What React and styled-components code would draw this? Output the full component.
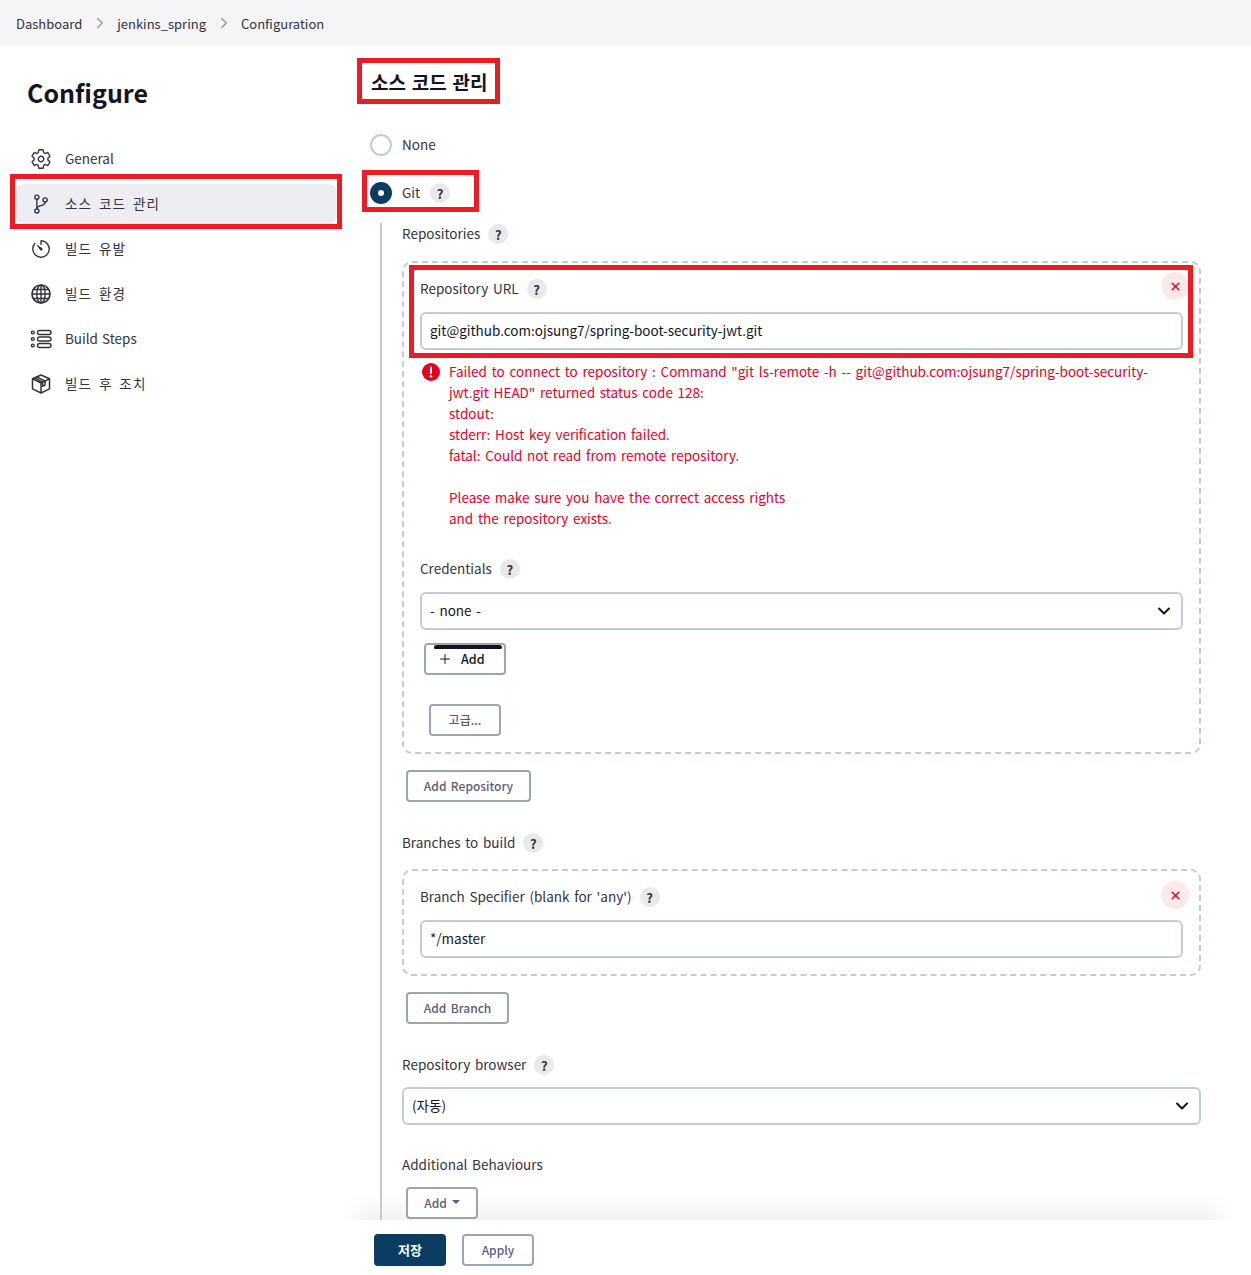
import React from 'react';
import styled, { createGlobalStyle } from 'styled-components';
import {
  IoSettingsOutline,
  IoGitBranchOutline,
  IoTimerOutline,
  IoChevronForward,
  IoAdd,
  IoClose,
} from 'react-icons/io5';

const GlobalStyle = createGlobalStyle`
  html, body { margin: 0; padding: 0; background: #fff; }
  body {
    font-family: "Noto Sans CJK KR", "Noto Sans", sans-serif;
    font-size: 13.5px;
    word-spacing: 1.7px;
    color: #14141f;
  }
  * { box-sizing: border-box; }
`;

const Page = styled.div`
  position: relative;
  width: 1251px;
  height: 1275px;
  overflow: hidden;
`;

const Breadcrumbs = styled.nav`
  display: flex;
  align-items: center;
  height: 46px;
  padding-left: 16px;
  background: #f5f5f7;
  color: #33333d;
`;

const Crumb = styled.span`
  font-size: 13px;
`;

const CrumbSep = styled.span`
  display: flex;
  width: 35px;
  justify-content: center;
  color: #9a9ba3;
  font-size: 16px;
  svg { display: block; margin-left: 1px; }
`;

const Layout = styled.div`
  position: relative;
  z-index: 1;
  display: grid;
  grid-template-columns: 345px 1fr;
`;

const Sidebar = styled.aside`
  padding-left: 16px;
`;

const Title = styled.h1`
  margin: 26px 0 0 11px;
  height: 42px;
  font-size: 25px;
  line-height: 40px;
  font-weight: 700;
  color: #14141f;
`;

const NavList = styled.div`
  display: flex;
  flex-direction: column;
  gap: 5px;
  width: 321px;
  margin-top: 25px;
`;

const NavItem = styled.div`
  position: relative;
  display: flex;
  align-items: center;
  gap: 13px;
  height: 40px;
  padding-left: 14px;
  border-radius: 8px;
  color: #33333d;
  background: ${p => (p.$active ? '#edeef3' : 'transparent')};
  svg { flex: none; width: 22px; height: 22px; }
`;

const NavLabel = styled.span`
  margin-bottom: 2px;
  letter-spacing: ${p => (p.$korean ? '1.2px' : '0')};
  word-spacing: ${p => (p.$korean ? '2.5px' : '1px')};
`;

const Main = styled.main`
  padding: 12px 50px 0 0;
`;

const Heading = styled.h2`
  position: relative;
  display: flex;
  align-items: center;
  width: 143px;
  height: 46px;
  margin: 0 0 0 12px;
  padding-left: 14px;
  font-size: 19px;
  font-weight: 700;
  word-spacing: 1.5px;
  color: #14141f;
`;

const LabelRow = styled.div`
  display: flex;
  align-items: center;
  gap: 8px;
  height: 22px;
  padding-bottom: 2px;
  margin-top: ${p => p.$top || 0}px;
  color: #33333d;
`;

const RadioRow = styled(LabelRow)`
  position: relative;
  gap: 10px;
  margin: ${p => p.$top}px 0 0 25px;
`;

const Radio = styled.span`
  flex: none;
  width: 22px;
  height: 22px;
  margin-top: 2px;
  border-radius: 50%;
  background: #fff;
  border: ${p => (p.$checked ? '8px solid #0b3d62' : '2px solid #c3ccd1')};
`;

const Nested = styled.section`
  margin: 19px 0 0 35px;
  padding-left: 20px;
  border-left: 2px solid #c3ccd1;
  height: 997px;
`;

const Help = styled.span`
  display: inline-flex;
  align-items: center;
  justify-content: center;
  width: 20px;
  height: 20px;
  margin-top: 2px;
  border-radius: 50%;
  background: #e9e9ea;
  color: #33333d;
  font-size: 13px;
  font-weight: 700;
`;

const RepeatBox = styled.div`
  position: relative;
  margin-top: ${p => p.$top}px;
  padding: 15px 16px 16px;
  border: 2px dashed #c3ccd1;
  border-radius: 10px;
`;

const RemoveButton = styled.span`
  position: absolute;
  top: ${p => p.$top}px;
  right: 10px;
  display: flex;
  align-items: center;
  justify-content: center;
  width: 28px;
  height: 28px;
  border-radius: 50%;
  background: #fce9ea;
  color: #e6001f;
  font-size: 15px;
`;

const UrlBlock = styled.div`
  position: relative;
`;

const TextInput = styled.div`
  display: flex;
  align-items: center;
  height: 38px;
  margin-top: ${p => p.$top}px;
  padding: 0 8px 2px;
  border: 2px solid #c3ccd1;
  border-radius: 6px;
  background: #fff;
  color: #14141f;
`;

const SelectBox = styled(TextInput)`
  justify-content: space-between;
  padding-right: 9px;
  svg { width: 16px; height: 16px; margin-top: 2px; color: #14141f; }
`;

const ErrorBlock = styled.div`
  display: flex;
  margin-top: 11px;
  gap: 9px;
  padding-left: 2px;
  color: #e6001f;
  line-height: 21px;
`;

const ErrorIcon = styled.svg`
  flex: none;
  width: 18px;
  height: 18px;
  margin-top: 2px;
`;

const ErrorText = styled.div`
  width: 720px;
  white-space: pre-wrap;
`;

const Button = styled.div`
  position: relative;
  display: flex;
  align-items: center;
  justify-content: center;
  width: ${p => p.$width}px;
  height: 32px;
  margin: ${p => p.$top}px 0 0 ${p => p.$left}px;
  padding-bottom: 2px;
  border: 2px solid #9aa7b0;
  border-radius: 4px;
  background: #fff;
  color: #5c5c78;
  font-size: 12px;
  font-weight: 500;
`;

const CredAdd = styled(Button)`
  color: #14141f;
  justify-content: flex-start;
  padding-left: 11px;
  gap: 8px;
  font-size: 12.5px;
  &::before {
    content: "";
    position: absolute;
    left: 8px;
    right: 2px;
    top: 0;
    height: 4px;
    border-radius: 4px 4px 2px 2px;
    background: #14141f;
  }
  svg { width: 16px; height: 16px; margin-top: 2px; }
`;

const Caret = styled.span`
  width: 0;
  height: 0;
  margin-left: 5px;
  border-left: 4px solid transparent;
  border-right: 4px solid transparent;
  border-top: 4px solid #5c5c78;
`;

const Mark = styled.span`
  position: absolute;
  top: ${p => p.$t}px;
  left: ${p => p.$l}px;
  right: ${p => p.$r}px;
  bottom: ${p => p.$b}px;
  border: ${p => p.$w || 5}px solid #ed1c24;
  pointer-events: none;
`;

const Footer = styled.footer`
  position: absolute;
  left: 345px;
  right: 20px;
  bottom: 0;
  display: flex;
  align-items: flex-start;
  gap: 16px;
  height: 55px;
  padding: 14px 0 0 29px;
  background: #fff;
  &::before {
    content: "";
    position: absolute;
    left: 0;
    right: 0;
    top: -26px;
    height: 26px;
    background: linear-gradient(to bottom, rgba(240, 240, 242, 0), rgba(240, 240, 242, 0.85));
    mask-image: linear-gradient(to right, transparent, #000 24px, #000 calc(100% - 24px), transparent);
  }
`;

const SaveButton = styled.div`
  display: flex;
  align-items: center;
  justify-content: center;
  width: 72px;
  height: 32px;
  padding-bottom: 2px;
  border-radius: 4px;
  background: #0b3d62;
  color: #fff;
  font-size: 13px;
  font-weight: 700;
`;

const ApplyButton = styled(Button)`
  margin: 0;
`;

const Chevron = () => (
  <svg viewBox="0 0 16 16" fill="none" stroke="currentColor" strokeWidth="2" strokeLinecap="round" strokeLinejoin="round">
    <path d="M3 5.5l5 5 5-5" />
  </svg>
);

const GlobeIcon = () => (
  <svg viewBox="0 0 22 22" fill="none" stroke="currentColor" strokeWidth="1.4">
    <circle cx="11" cy="11" r="9" strokeWidth="1.7" />
    <ellipse cx="11" cy="11" rx="4.2" ry="9" />
    <path d="M11 2v18M2 11h18M3.4 6.5h15.2M3.4 15.5h15.2" />
  </svg>
);

const StepsIcon = () => (
  <svg viewBox="0 0 22 22" fill="none" stroke="currentColor" strokeWidth="1.4">
    <rect x="7.5" y="2.5" width="13.5" height="4" rx="2" />
    <rect x="7.5" y="9" width="13.5" height="4" rx="2" />
    <rect x="7.5" y="15.5" width="13.5" height="4" rx="2" />
    <circle cx="2.8" cy="4.5" r="1.4" />
    <circle cx="2.8" cy="11" r="1.4" />
    <circle cx="2.8" cy="17.5" r="1.4" />
  </svg>
);

const BoxIcon = () => (
  <svg viewBox="0 0 22 22" fill="none" stroke="currentColor" strokeWidth="1.5" strokeLinejoin="round">
    <path d="M11 2l8.5 3.8v10L11 20l-8.5-4.2v-10z" />
    <path d="M2.5 5.8L11 10l8.5-4.2M11 10v10" />
    <path d="M6.5 3.9L15 8v4l-2.5 1.2V9.2L4.5 5" />
  </svg>
);

const navItems = [
  { icon: <IoSettingsOutline />, label: 'General' },
  { icon: <IoGitBranchOutline />, label: '소스 코드 관리', korean: true, active: true },
  { icon: <IoTimerOutline />, label: '빌드 유발', korean: true },
  { icon: <GlobeIcon />, label: '빌드 환경', korean: true },
  { icon: <StepsIcon />, label: 'Build Steps' },
  { icon: <BoxIcon />, label: '빌드 후 조치', korean: true },
];

const errorMessage = `Failed to connect to repository : Command "git ls-remote -h -- git@github.com:ojsung7/spring-boot-security-jwt.git HEAD" returned status code 128:
stdout:
stderr: Host key verification failed.
fatal: Could not read from remote repository.

Please make sure you have the correct access rights
and the repository exists.`;

export default function App() {
  return (
    <Page>
      <GlobalStyle />
      <Breadcrumbs>
        <Crumb>Dashboard</Crumb>
        <CrumbSep><IoChevronForward /></CrumbSep>
        <Crumb>jenkins_spring</Crumb>
        <CrumbSep><IoChevronForward /></CrumbSep>
        <Crumb>Configuration</Crumb>
      </Breadcrumbs>
      <Layout>
        <Sidebar>
          <Title>Configure</Title>
          <NavList>
            {navItems.map(item => (
              <NavItem key={item.label} $active={item.active}>
                {item.icon}
                <NavLabel $korean={item.korean}>{item.label}</NavLabel>
                {item.active && <Mark $t={-10} $l={-6} $r={-5} $b={-5} />}
              </NavItem>
            ))}
          </NavList>
        </Sidebar>
        <Main>
          <Heading>
            소스 코드 관리
            <Mark $t={0} $l={0} $r={0} $b={0} />
          </Heading>
          <RadioRow $top={30}>
            <Radio />
            None
          </RadioRow>
          <RadioRow $top={26}>
            <Radio $checked />
            Git
            <Help>?</Help>
            <Mark $t={-12} $l={-8} $r={722} $b={-8} />
          </RadioRow>
          <Nested>
            <LabelRow>Repositories <Help>?</Help></LabelRow>
            <RepeatBox $top={16}>
              <RemoveButton $top={9}><IoClose /></RemoveButton>
              <UrlBlock>
                <LabelRow>Repository URL <Help>?</Help></LabelRow>
                <TextInput $top={12}>git@github.com:ojsung7/spring-boot-security-jwt.git</TextInput>
                <Mark $t={-13} $l={-11} $r={-10} $b={-8} />
              </UrlBlock>
              <ErrorBlock>
                <ErrorIcon viewBox="0 0 18 18">
                  <circle cx="9" cy="9" r="9" fill="#e6001f" />
                  <rect x="8" y="3.5" width="2" height="7.5" rx="1" fill="#fff" />
                  <circle cx="9" cy="13.3" r="1.2" fill="#fff" />
                </ErrorIcon>
                <ErrorText>{errorMessage}</ErrorText>
              </ErrorBlock>
              <LabelRow $top={29}>Credentials <Help>?</Help></LabelRow>
              <SelectBox $top={12}>- none -<Chevron /></SelectBox>
              <CredAdd $top={13} $left={4} $width={82}><IoAdd />Add</CredAdd>
              <Button $top={29} $left={9} $width={72}>고급...</Button>
            </RepeatBox>
            <Button $top={16} $left={4} $width={125}>Add Repository</Button>
            <LabelRow $top={30}>Branches to build <Help>?</Help></LabelRow>
            <RepeatBox $top={15}>
              <RemoveButton $top={10}><IoClose /></RemoveButton>
              <LabelRow>Branch Specifier (blank for 'any') <Help>?</Help></LabelRow>
              <TextInput $top={12}>*/master</TextInput>
            </RepeatBox>
            <Button $top={16} $left={4} $width={103}>Add Branch</Button>
            <LabelRow $top={30}>Repository browser <Help>?</Help></LabelRow>
            <SelectBox $top={11}>(자동)<Chevron /></SelectBox>
            <LabelRow $top={29}>Additional Behaviours</LabelRow>
            <Button $top={11} $left={4} $width={72}>Add<Caret /></Button>
          </Nested>
        </Main>
      </Layout>
      <Footer>
        <SaveButton>저장</SaveButton>
        <ApplyButton $width={72}>Apply</ApplyButton>
      </Footer>
    </Page>
  );
}
